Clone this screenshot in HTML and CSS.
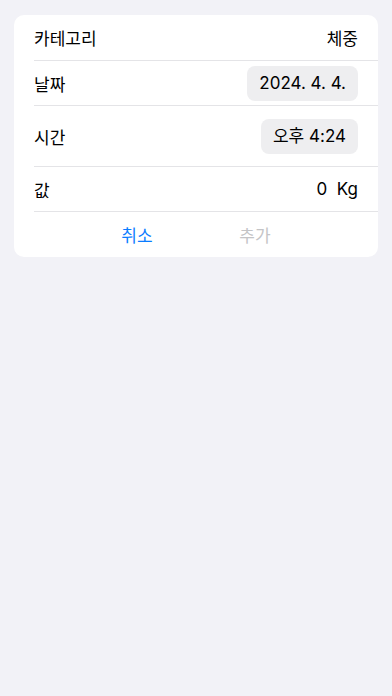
FILE: index.html
```html
<!DOCTYPE html>
<html>
<head>
	<meta charset="utf-8">
	<title>기록 추가</title>
	<link rel="stylesheet" href="styles.css">
</head>
<body>
	<div class="card">
		<div class="row first">
			<span class="label">카테고리</span>
			<span class="value">체중</span>
		</div>
		<div class="row">
			<span class="label">날짜</span>
			<span class="pill">2024. 4. 4.</span>
		</div>
		<div class="row tall">
			<span class="label">시간</span>
			<span class="pill">오후 4:24</span>
		</div>
		<div class="row">
			<span class="label">값</span>
			<span class="value">0&nbsp; Kg</span>
		</div>
		<div class="actions">
			<span class="btn cancel">취소</span>
			<span class="btn add">추가</span>
		</div>
	</div>
</body>
</html>
```
FILE: styles.css
```css
html {
	font-family: "Inter", "Noto Sans CJK KR", sans-serif;
	box-sizing: border-box;
}
*, *::before, *::after {
	box-sizing: inherit;
}
body {
	margin: 0;
	background: #f2f2f7;
	min-height: 696px;
	padding: 15px 14px 0 14px;
	color: #000;
}
.card {
	background: #fff;
	border-radius: 10px;
	padding-left: 20px;
}
.row {
	display: flex;
	align-items: center;
	justify-content: space-between;
	height: 45px;
	padding-right: 20px;
	border-bottom: 1px solid #e4e4e7;
	font-size: 17px;
}
.row.first {
	height: 46px;
}
.row.tall {
	height: 61px;
}
.pill {
	background: #eeeef0;
	border-radius: 8px;
	padding: 0 12px;
	height: 35px;
	line-height: 35px;
}
.actions {
	display: flex;
	justify-content: center;
	height: 45px;
	align-items: center;
	margin-left: -20px;
	font-size: 17px;
}
.btn {
	width: 118px;
	text-align: center;
}
.cancel {
	color: #0a7cff;
}
.add {
	color: #c4c4c6;
}
```
